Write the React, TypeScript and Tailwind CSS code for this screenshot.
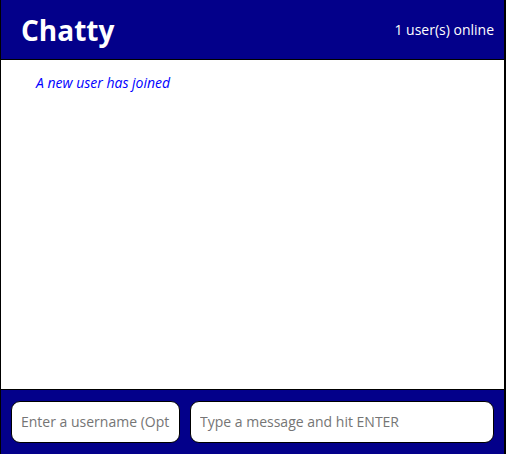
import React, { useState } from 'react';

const font = { fontFamily: '"Open Sans", "Noto Sans", sans-serif' };

const NavBar: React.FC<{ count: number }> = ({ count }) => (
  <nav className="h-[60px] shrink-0 bg-[#03008a] border-b border-black flex items-center justify-between pl-[20px] pr-[10px]">
    <span className="text-[28px] font-bold text-white leading-none">Chatty</span>
    <span className="text-[14px] text-white">{count} user(s) online</span>
  </nav>
);

const App: React.FC = () => {
  const [name, setName] = useState('');
  const [msg, setMsg] = useState('');

  return (
    <div style={font} className="h-[454px] flex flex-col border-l border-r-2 border-black bg-white">
      <NavBar count={1} />
      <main className="flex-1 pt-[12px] px-[35px]">
        <p className="text-[14px] italic text-[#0000ff]">A new user has joined</p>
      </main>
      <footer className="h-[65px] shrink-0 bg-[#03008a] border-t border-black flex items-center gap-[10px] px-[10px] pb-[1px]">
        <input
          value={name}
          onChange={e => setName(e.target.value)}
          placeholder="Enter a username (Optional)"
          className="w-[169px] h-[42px] rounded-[9px] border border-black bg-white px-[9px] text-[14px] text-black placeholder:text-[#757575] outline-none"
        />
        <input
          value={msg}
          onChange={e => setMsg(e.target.value)}
          placeholder="Type a message and hit ENTER"
          className="flex-1 h-[42px] rounded-[9px] border border-black bg-white px-[9px] text-[14px] text-black placeholder:text-[#757575] outline-none"
        />
      </footer>
    </div>
  );
};

export default App;
